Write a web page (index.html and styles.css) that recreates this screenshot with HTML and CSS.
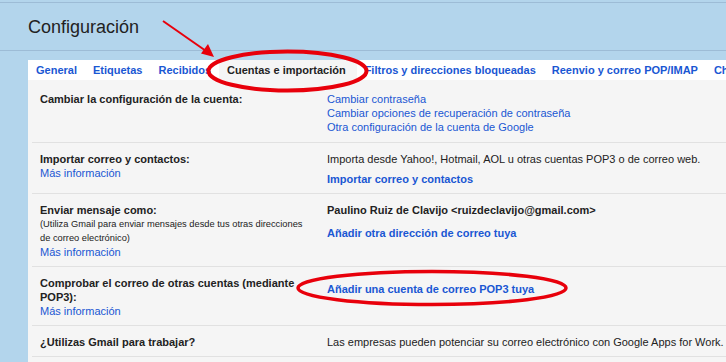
FILE: index.html
```html
<!DOCTYPE html>
<html lang="es">
<head>
<meta charset="utf-8">
<title>Configuración</title>
<link rel="stylesheet" href="styles.css">
</head>
<body>
<div class="page">
  <header class="header">
    <h1 class="title">Configuración</h1>
  </header>
  <main class="panel">
    <nav class="tabs">
      <a class="tab">General</a>
      <a class="tab">Etiquetas</a>
      <a class="tab">Recibidos</a>
      <a class="tab tab-active">Cuentas e importación</a>
      <a class="tab">Filtros y direcciones bloqueadas</a>
      <a class="tab">Reenvio y correo POP/IMAP</a>
      <a class="tab">Chat</a>
    </nav>
    <div class="content">
      <div class="row row-first">
        <div class="label"><b>Cambiar la configuración de la cuenta:</b></div>
        <div class="value">
          <a class="link">Cambiar contraseña</a>
          <a class="link">Cambiar opciones de recuperación de contraseña</a>
          <a class="link">Otra configuración de la cuenta de Google</a>
        </div>
      </div>
      <div class="row">
        <div class="label">
          <b>Importar correo y contactos:</b>
          <a class="link">Más información</a>
        </div>
        <div class="value">
          <span class="text">Importa desde Yahoo!, Hotmail, AOL u otras cuentas POP3 o de correo web.</span>
          <a class="link link-bold gap-6">Importar correo y contactos</a>
        </div>
      </div>
      <div class="row">
        <div class="label">
          <b>Enviar mensaje como:</b>
          <span class="small">(Utiliza Gmail para enviar mensajes desde tus otras direcciones de correo electrónico)</span>
          <a class="link">Más información</a>
        </div>
        <div class="value">
          <b class="text">Paulino Ruiz de Clavijo &lt;ruizdeclavijo@gmail.com&gt;</b>
          <a class="link link-bold gap-9">Añadir otra dirección de correo tuya</a>
        </div>
      </div>
      <div class="row">
        <div class="label">
          <b>Comprobar el correo de otras cuentas (mediante POP3):</b>
          <a class="link">Más información</a>
        </div>
        <div class="value">
          <a class="link link-bold gap-6">Añadir una cuenta de correo POP3 tuya</a>
        </div>
      </div>
      <div class="row">
        <div class="label"><b>¿Utilizas Gmail para trabajar?</b></div>
        <div class="value">
          <span class="text">Las empresas pueden potenciar su correo electrónico con Google Apps for Work.</span>
        </div>
      </div>
    </div>
  </main>
  <svg class="annot" width="726" height="362" viewBox="0 0 726 362">
    <line x1="163" y1="21" x2="206" y2="51" stroke="#e8000b" stroke-width="2"/>
    <polygon points="214,57 201,53.5 208,44" fill="#e8000b"/>
    <ellipse cx="287.5" cy="71" rx="79" ry="19.5" fill="none" stroke="#e8000b" stroke-width="4"/>
    <ellipse cx="432" cy="288" rx="134" ry="16.5" fill="none" stroke="#e8000b" stroke-width="3.5"/>
  </svg>
</div>
</body>
</html>
```
FILE: styles.css
```css
html, body {
  margin: 0;
  padding: 0;
}
body {
  background: #b3d5ec;
  font-family: "Liberation Sans", Arial, sans-serif;
  font-size: 11px;
  color: #222;
  overflow: hidden;
  width: 726px;
  height: 362px;
}
.page {
  position: relative;
  padding-top: 2px;
  width: 726px;
  height: 360px;
  overflow: hidden;
}
.header {
  border-top: 1px solid #9dbcd6;
  border-bottom: 1px solid #9dbcd6;
  height: 47px;
  box-sizing: content-box;
}
.title {
  margin: 0;
  padding: 13px 0 0 28px;
  font-size: 18px;
  line-height: 22px;
  font-weight: normal;
  color: #222;
}
.panel {
  margin: 9px 0 0 28px;
  width: 698px;
  overflow: hidden;
}
.tabs {
  display: flex;
  height: 20px;
  background: #fff;
  white-space: nowrap;
}
.tab {
  padding: 0 8px;
  line-height: 20px;
  font-weight: bold;
  color: #1a57d3;
  flex: none;
}
.tab-active {
  padding-right: 11px;
  background: #f5f5f5;
  color: #222;
}
.content {
  background: #f5f5f5;
  padding: 3px 0 0 4px;
  height: 300px;
}
.row {
  display: grid;
  grid-template-columns: 295px 1fr;
  padding: 9px 0 7px;
  border-bottom: 1px solid #e1e1e1;
  line-height: 14px;
}
.row-first {
  padding-bottom: 8px;
}
.label {
  padding: 0 19px 0 8px;
  display: flex;
  flex-direction: column;
}
.value {
  display: flex;
  flex-direction: column;
  align-items: flex-start;
  white-space: nowrap;
}
.link {
  color: #1a57d3;
}
.link-bold {
  font-weight: bold;
}
.gap-6 {
  margin-top: 6px;
}
.gap-9 {
  margin-top: 9px;
}
.small {
  font-size: 9.3px;
  line-height: 14px;
  color: #222;
}
.annot {
  position: absolute;
  left: 0;
  top: 0;
  pointer-events: none;
}
```
